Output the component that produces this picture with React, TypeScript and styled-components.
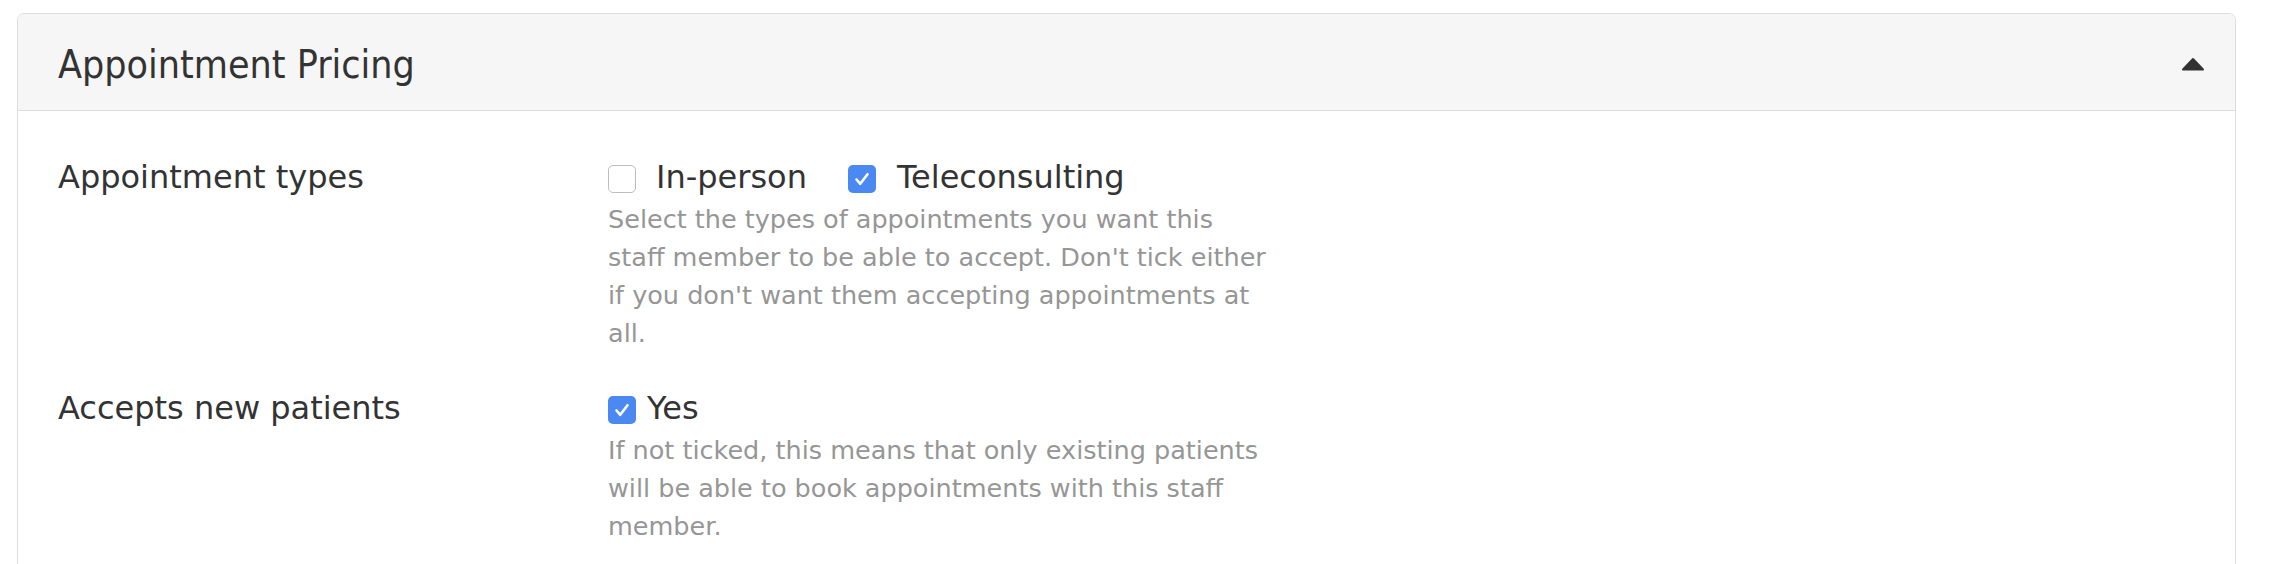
import React from "react";
import styled, { createGlobalStyle } from "styled-components";

const GlobalStyle = createGlobalStyle`
  html, body {
    margin: 0;
    padding: 0;
    background: #ffffff;
  }
  body {
    font-family: "DejaVu Sans", Verdana, sans-serif;
    color: #333333;
  }
`;

const Page = styled.div`
  padding: 13px 0 0 17px;
`;

const Panel = styled.section`
  width: 2219px;
  box-sizing: border-box;
  border: 1px solid #dddddd;
  border-radius: 7px;
  background: #ffffff;
`;

const PanelHeader = styled.header`
  display: flex;
  align-items: center;
  justify-content: space-between;
  padding: 21px 30px 15px 40px;
  background: #f6f6f6;
  border-bottom: 1px solid #dddddd;
  border-radius: 6px 6px 0 0;
`;

const PanelTitle = styled.h3`
  margin: 0;
  font-family: "DejaVu Sans Condensed", "DejaVu Sans", sans-serif;
  font-stretch: condensed;
  font-weight: normal;
  font-size: 39px;
  line-height: 60px;
  color: #333333;
`;

const Caret = styled.svg`
  display: block;
  width: 24px;
  height: 14px;
  margin-bottom: 2px;
`;

const PanelBody = styled.div`
  display: flex;
  flex-direction: column;
  gap: 34px;
  padding: 44px 40px 80px 40px;
`;

const FormRow = styled.div`
  display: grid;
  grid-template-columns: 550px 1fr;
`;

const Label = styled.div`
  font-size: 32px;
  line-height: 45px;
  color: #333333;
`;

const Controls = styled.div`
  display: flex;
  flex-direction: column;
`;

const CheckLine = styled.div`
  display: flex;
  align-items: center;
  gap: 41px;
  height: 45px;
`;

const Option = styled.label<{ $gap: number }>`
  display: inline-flex;
  align-items: center;
  gap: ${(p) => p.$gap}px;
  font-size: 32px;
  line-height: 45px;
  color: #333333;
`;

const Box = styled.span<{ $checked: boolean }>`
  display: inline-flex;
  align-items: center;
  justify-content: center;
  box-sizing: border-box;
  width: 28px;
  height: 28px;
  margin-top: 3px;
  border-radius: 5px;
  background: ${(p) => (p.$checked ? "#4a88f2" : "#ffffff")};
  border: ${(p) => (p.$checked ? "none" : "1.5px solid #bdbdbd")};
`;

const Help = styled.p`
  margin: 0;
  font-size: 25.5px;
  line-height: 38px;
  color: #969696;
`;

const Checkbox: React.FC<{ checked: boolean }> = ({ checked }) => (
  <Box $checked={checked}>
    {checked && (
      <svg width="28" height="28" viewBox="0 0 28 28">
        <path
          d="M8.5 14.5 L12.3 18.8 L19.5 9.2"
          fill="none"
          stroke="#ffffff"
          strokeWidth="2.6"
          strokeLinecap="round"
          strokeLinejoin="round"
        />
      </svg>
    )}
  </Box>
);

const HelpText: React.FC<{ lines: string[] }> = ({ lines }) => (
  <Help>
    {lines.map((l, i) => (
      <React.Fragment key={i}>
        {l}
        {i < lines.length - 1 && <br />}
      </React.Fragment>
    ))}
  </Help>
);

export default function App() {
  return (
    <>
      <GlobalStyle />
      <Page>
        <Panel>
          <PanelHeader>
            <PanelTitle>Appointment Pricing</PanelTitle>
            <Caret viewBox="0 0 24 14">
              <path
                d="M2 12.5 L12 2 L22 12.5 Z"
                fill="#333333"
                stroke="#333333"
                strokeWidth="2"
                strokeLinejoin="round"
              />
            </Caret>
          </PanelHeader>
          <PanelBody>
            <FormRow>
              <Label>Appointment types</Label>
              <Controls>
                <CheckLine>
                  <Option $gap={20}>
                    <Checkbox checked={false} />
                    In-person
                  </Option>
                  <Option $gap={21}>
                    <Checkbox checked={true} />
                    Teleconsulting
                  </Option>
                </CheckLine>
                <HelpText
                  lines={[
                    "Select the types of appointments you want this",
                    "staff member to be able to accept. Don't tick either",
                    "if you don't want them accepting appointments at",
                    "all.",
                  ]}
                />
              </Controls>
            </FormRow>
            <FormRow>
              <Label>Accepts new patients</Label>
              <Controls>
                <CheckLine>
                  <Option $gap={11}>
                    <Checkbox checked={true} />
                    Yes
                  </Option>
                </CheckLine>
                <HelpText
                  lines={[
                    "If not ticked, this means that only existing patients",
                    "will be able to book appointments with this staff",
                    "member.",
                  ]}
                />
              </Controls>
            </FormRow>
          </PanelBody>
        </Panel>
      </Page>
    </>
  );
}
